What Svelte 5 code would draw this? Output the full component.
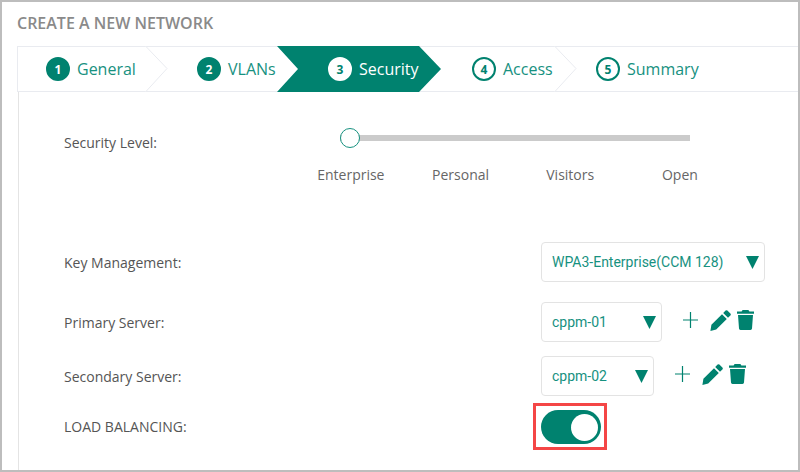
<script lang="ts">
	const steps = [
		{ n: 1, label: 'General', done: true },
		{ n: 2, label: 'VLANs', done: true },
		{ n: 3, label: 'Security', active: true },
		{ n: 4, label: 'Access' },
		{ n: 5, label: 'Summary' }
	];
	const levels = ['Enterprise', 'Personal', 'Visitors', 'Open'];
	const servers = [
		{ label: 'Primary Server:', value: 'cppm-01', cls: 'primary' },
		{ label: 'Secondary Server:', value: 'cppm-02', cls: 'secondary' }
	];
</script>

{#snippet arrow()}
	<svg class="arrow" width="13" height="14" viewBox="0 0 13 14" aria-hidden="true">
		<path d="M0 1h13L6.5 14z" fill="#00826f" />
	</svg>
{/snippet}

<div class="frame">
	<h1>CREATE A NEW NETWORK</h1>

	<nav class="stepper">
		{#each steps as s}
			<div class="step s{s.n}" class:active={s.active} class:done={s.done}>
				<span class="num">{s.n}</span>
				<span>{s.label}</span>
				{#if s.n === 1 || s.n === 4}
					<svg class="chev" width="23" height="46" viewBox="0 0 23 46" aria-hidden="true">
						<path d="M0.5 0L22 22.5 0.5 46" fill="#fff" stroke="#e9ebf0" />
					</svg>
				{/if}
			</div>
		{/each}
	</nav>

	<div class="body">
		<section class="security">
			<span class="label">Security Level:</span>
			<div class="slider">
				<div class="track"><span class="knob"></span></div>
				<div class="ticks">
					{#each levels as l}<span>{l}</span>{/each}
				</div>
			</div>
		</section>

		<div class="row key">
			<span class="label">Key Management:</span>
			<div class="select wide">
				<span>WPA3-Enterprise(CCM 128)</span>
				{@render arrow()}
			</div>
		</div>

		{#each servers as srv}
			<div class="row {srv.cls}">
				<span class="label">{srv.label}</span>
				<div class="select">
					<span>{srv.value}</span>
					{@render arrow()}
				</div>
				<div class="tools">
					<svg width="15" height="16" viewBox="0 0 15 16" aria-hidden="true">
						<path d="M7.5 0v16M0 8h15" stroke="#00826f" stroke-width="1.2" fill="none" />
					</svg>
					<svg width="21" height="21" viewBox="0 0 21 21" aria-hidden="true">
						<path d="M15.6 0.6a1.3 1.3 0 0 1 1.8 0l3 3a1.3 1.3 0 0 1 0 1.8L18 7.8 13.2 3zM12 4.2L16.8 9 6.2 19.6 0.4 21l1-6.2z" fill="#00826f" />
					</svg>
					<svg width="17" height="20" viewBox="0 0 17 20" aria-hidden="true">
						<path d="M5.6 0h5.8l1 1.6H17v2.2H0V1.6h4.6zM1 5h15l-1 13.6A1.5 1.5 0 0 1 13.5 20h-10A1.5 1.5 0 0 1 2 18.6z" fill="#00826f" />
					</svg>
				</div>
			</div>
		{/each}

		<div class="row balance">
			<span class="label">LOAD BALANCING:</span>
			<div class="highlight">
				<div class="toggle"><span></span></div>
			</div>
		</div>
	</div>
</div>

<style>
	:global(body) {
		margin: 0;
		background: #fff;
	}

	.frame {
		box-sizing: border-box;
		width: 800px;
		height: 472px;
		border: 2px solid #bdbdbd;
		padding-left: 15px;
		overflow: hidden;
		font-family: 'Open Sans', sans-serif;
		color: #555;
	}

	h1 {
		margin: 0;
		height: 44px;
		font-size: 16px;
		font-weight: 600;
		line-height: 43px;
		color: #8a8a8a;
	}

	.stepper {
		display: flex;
		height: 46px;
		margin-right: -2px;
		box-sizing: border-box;
		border: 1px solid #e9ebf0;
		border-right: none;
		font-size: 16px;
		color: #17917f;
	}

	.step {
		position: relative;
		display: flex;
		align-items: center;
		gap: 7px;
		box-sizing: border-box;
		flex: none;
	}

	.s1 { width: 127px; padding-left: 28px; }
	.s2 { width: 132px; padding-left: 52px; }
	.s3 {
		width: 164px;
		margin: -1px -22px -1px 0;
		padding-left: 51px;
		background: #00826f;
		color: #fff;
		clip-path: polygon(0 0, 142px 0, 164px 50%, 142px 100%, 0 100%, 21px 50%);
	}
	.s4 { width: 135px; padding-left: 53px; }
	.s5 { padding-left: 42px; }

	.chev {
		position: absolute;
		left: 100%;
		top: -1px;
	}

	.num {
		display: flex;
		align-items: center;
		justify-content: center;
		box-sizing: border-box;
		width: 24px;
		height: 24px;
		border: 2px solid #00826f;
		border-radius: 50%;
		font-size: 12px;
		font-weight: 700;
		color: #00826f;
	}

	.done .num {
		background: #00826f;
		color: #fff;
	}

	.active .num {
		background: #fff;
		border-color: #fff;
	}

	.body {
		height: 380px;
		margin-left: 1px;
		padding-left: 45px;
		border-left: 1px solid #e4e4e4;
		font-size: 14px;
	}

	.label {
		flex: none;
		width: 477px;
	}

	.security {
		display: flex;
		align-items: flex-start;
		padding-top: 40px;
		height: 150px;
		box-sizing: border-box;
	}

	.security .label {
		width: 232px;
		padding-top: 1px;
		line-height: 20px;
	}

	.slider {
		width: 440px;
	}

	.track {
		position: relative;
		width: 350px;
		height: 6px;
		margin: 3px 0 0 44px;
		background: #cbcbcb;
	}

	.knob {
		position: absolute;
		left: 0;
		top: -7px;
		box-sizing: border-box;
		width: 20px;
		height: 20px;
		border: 1px solid #17917f;
		border-radius: 50%;
		background: #fff;
	}

	.ticks {
		display: flex;
		margin-top: 24px;
		color: #666;
	}

	.ticks span {
		width: 109.7px;
		text-align: center;
	}

	.row {
		display: flex;
		align-items: center;
	}

	.key { height: 40px; }
	.primary { height: 40px; margin-top: 20px; }
	.secondary { height: 40px; margin-top: 14px; }
	.balance { margin-top: 7px; }

	.select {
		display: flex;
		align-items: center;
		justify-content: space-between;
		box-sizing: border-box;
		height: 40px;
		padding: 0 5px 0 10px;
		border: 1px solid #e3e3e3;
		border-radius: 4px;
		font-family: Roboto, sans-serif;
		font-size: 14px;
		color: #17917f;
	}

	.wide { width: 224px; }
	.primary .select { width: 121px; }
	.secondary .select { width: 113px; }

	.tools {
		display: flex;
		align-items: center;
		margin: 0 0 4px 21px;
	}

	.tools svg:nth-child(2) { margin-left: 12px; }
	.tools svg:nth-child(3) { margin-left: 6px; }

	.highlight {
		box-sizing: border-box;
		width: 74px;
		height: 47px;
		margin-left: -8px;
		padding: 4px 5px;
		border: 3px solid #f44646;
	}

	.toggle {
		display: flex;
		align-items: center;
		justify-content: flex-end;
		box-sizing: border-box;
		width: 60px;
		height: 34px;
		padding-right: 3px;
		border-radius: 17px;
		background: #00826f;
	}

	.toggle span {
		width: 27px;
		height: 27px;
		border-radius: 50%;
		background: #fff;
	}
</style>
